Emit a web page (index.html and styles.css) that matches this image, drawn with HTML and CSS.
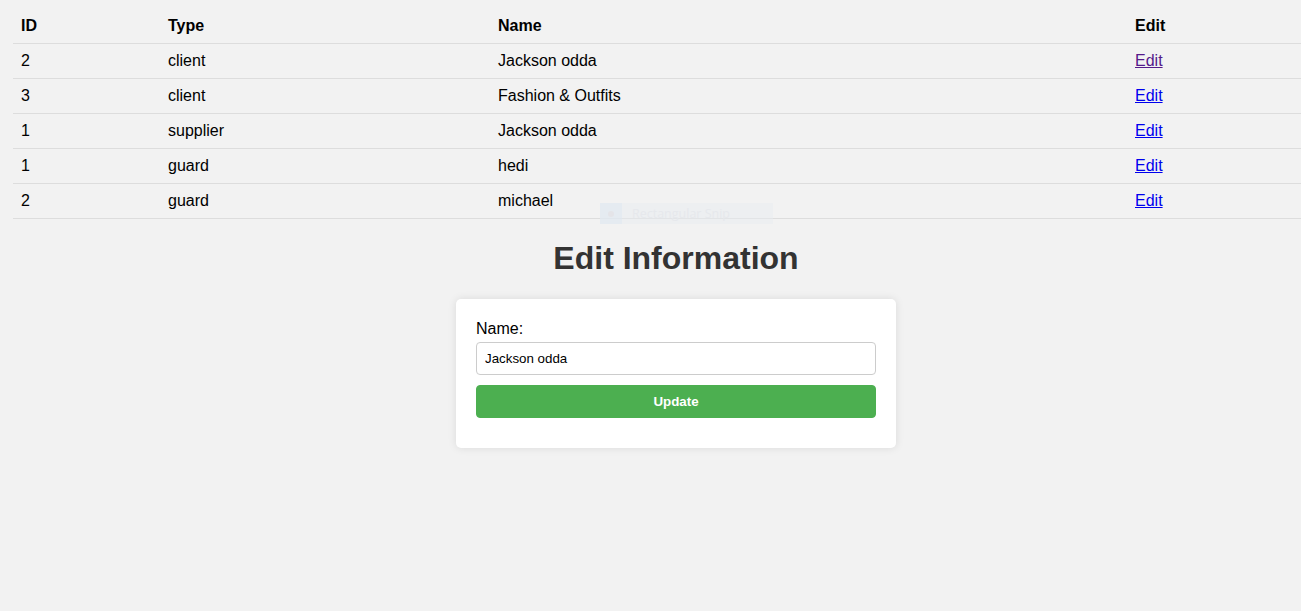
FILE: index.html
```html
<!DOCTYPE html>
<html>
<head>
<meta charset="utf-8">
<link rel="stylesheet" href="styles.css">
</head>
<body>
<table class="list">
  <thead>
    <tr><th class="c1">ID</th><th class="c2">Type</th><th class="c3">Name</th><th class="c4">Edit</th></tr>
  </thead>
  <tbody>
    <tr><td>2</td><td>client</td><td>Jackson odda</td><td><a href="#" class="visited">Edit</a></td></tr>
    <tr><td>3</td><td>client</td><td>Fashion &amp; Outfits</td><td><a href="#">Edit</a></td></tr>
    <tr><td>1</td><td>supplier</td><td>Jackson odda</td><td><a href="#">Edit</a></td></tr>
    <tr><td>1</td><td>guard</td><td>hedi</td><td><a href="#">Edit</a></td></tr>
    <tr><td>2</td><td>guard</td><td>michael</td><td><a href="#">Edit</a></td></tr>
  </tbody>
</table>
<div class="snip"><span class="snip-icon"><span class="snip-dot"></span></span><span class="snip-text">Rectangular Snip</span></div>
<section class="editor">
  <h1 class="title">Edit Information</h1>
  <form class="card">
    <label class="lbl" for="name">Name:</label>
    <input class="field" id="name" type="text" value="Jackson odda">
    <button class="btn" type="button">Update</button>
  </form>
</section>
</body>
</html>
```
FILE: styles.css
```css
html, body {
  margin: 0;
  padding: 0;
  background: #f2f2f2;
  font-family: "Liberation Sans", Arial, sans-serif;
  color: #000;
  overflow: hidden;
}
body {
  position: relative;
  height: 611px;
}
.list {
  border-collapse: collapse;
  margin: 9px 0 0 13px;
  width: calc(100% - 13px);
  font-size: 16px;
}
.list th, .list td {
  text-align: left;
  padding: 8px;
  border-bottom: 1px solid #dddddd;
  line-height: 18px;
}
.list th { font-weight: bold; }
.c1 { width: 131px; }
.c2 { width: 314px; }
.c3 { width: 621px; }
.list a { color: #0000ee; text-decoration: underline; }
.list a.visited { color: #551a8b; }
.snip {
  position: absolute;
  left: 600px;
  top: 203px;
  width: 173px;
  height: 21px;
  background: rgba(232, 236, 240, 0.5);
  display: flex;
  align-items: center;
}
.snip-icon {
  width: 22px;
  height: 21px;
  background: rgba(222, 232, 242, 0.5);
  display: flex;
  align-items: center;
  justify-content: center;
}
.snip-dot {
  width: 6px;
  height: 6px;
  border-radius: 50%;
  background: #e4e4e8;
}
.snip-text {
  margin-left: 10px;
  font-family: "Open Sans", sans-serif;
  font-size: 12.5px;
  color: #e6e8ec;
}
.editor {
  padding-left: 51px;
  display: flex;
  flex-direction: column;
  align-items: center;
}
.title {
  font-size: 32px;
  font-weight: bold;
  color: #333333;
  margin: 21px 0 22px;
  line-height: 37px;
}
.card {
  width: 400px;
  background: #ffffff;
  padding: 20px 20px 20px;
  border-radius: 5px;
  box-shadow: 0 0 8px rgba(0, 0, 0, 0.1);
  display: flex;
  flex-direction: column;
}
.lbl {
  font-size: 16px;
  line-height: 18px;
  margin: 1px 0 4px;
}
.field {
  box-sizing: border-box;
  width: 400px;
  height: 33px;
  padding: 8px;
  font-family: "Liberation Sans", Arial, sans-serif;
  font-size: 13.33px;
  border: 1px solid #cccccc;
  border-radius: 4px;
  margin: 0;
}
.btn {
  box-sizing: border-box;
  width: 400px;
  height: 33px;
  margin: 10px 0 10px;
  background: #4caf50;
  color: #ffffff;
  border: 1px solid #4caf50;
  border-radius: 4px;
  font-family: "Liberation Sans", Arial, sans-serif;
  font-size: 13.33px;
  font-weight: bold;
}
```
